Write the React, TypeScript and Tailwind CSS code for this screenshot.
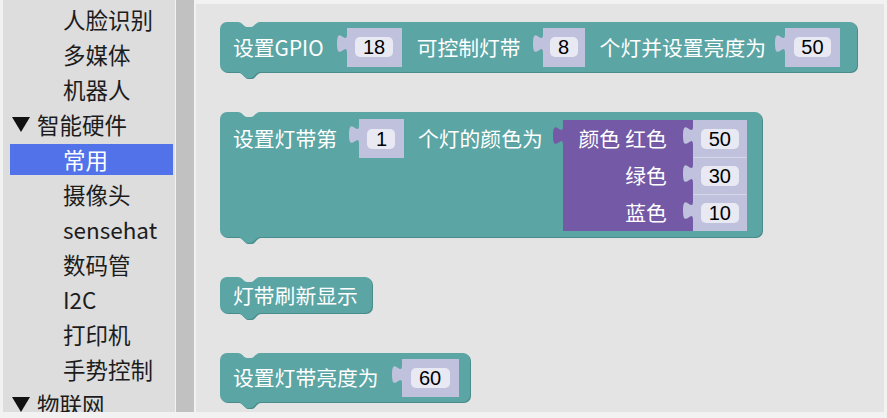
import React from "react";
import clsx from "clsx";

type Item = { label: string; level: 0 | 1; selected?: boolean };

const items: Item[] = [
  { label: "人脸识别", level: 1 },
  { label: "多媒体", level: 1 },
  { label: "机器人", level: 1 },
  { label: "智能硬件", level: 0 },
  { label: "常用", level: 1, selected: true },
  { label: "摄像头", level: 1 },
  { label: "sensehat", level: 1 },
  { label: "数码管", level: 1 },
  { label: "I2C", level: 1 },
  { label: "打印机", level: 1 },
  { label: "手势控制", level: 1 },
  { label: "物联网", level: 0 },
];

function Caret() {
  return (
    <svg width="18" height="15" viewBox="0 0 18 15" className="shrink-0">
      <polygon points="0,0 18,0 9,15" fill="#111" />
    </svg>
  );
}

function Sidebar() {
  return (
    <div className="h-full w-[172px] shrink-0 overflow-hidden bg-[#dddddd] pt-[4px] font-['Noto_Sans_CJK_SC',sans-serif] text-[22.5px]">
      {items.map((it) => (
        <div key={it.label} className="h-[35px] pl-[7px] pr-[2px]">
          <div
            className={clsx(
              "flex h-[31px] items-center leading-none whitespace-nowrap",
              it.selected ? "bg-[#5272ea] text-white" : "text-[#1c1c1c]",
              it.level ? "pl-[53px]" : "gap-[7px] pl-[2px]"
            )}
          >
            {it.level === 0 && <Caret />}
            <span>{it.label}</span>
          </div>
        </div>
      ))}
    </div>
  );
}

// jigsaw knob on the left side of an output (value) block
function Tab({ fill, className }: { fill: string; className?: string }) {
  return (
    <svg width="10" height="19" viewBox="0 0 8 15" preserveAspectRatio="none" className={clsx("absolute overflow-visible", className)}>
      <path d="M8,0 C8,10 0,-8 0,7.5 C0,23 8,5 8,15 Z" fill={fill} />
    </svg>
  );
}

function Notches() {
  return (
    <>
      <svg width="22" height="6" viewBox="0 0 22 6" className="absolute left-[18px] top-0">
        <path d="M0,0 C4,0 6,5 9,5 L13,5 C16,5 18,0 22,0 Z" fill="#e4e4e4" />
      </svg>
      <svg width="24" height="8" viewBox="0 0 24 8" className="absolute left-[18px] top-full">
        <path d="M0,0 C4,0 6,6 9,6 L13,6 C16,6 18,0 22,0 Z" fill="#4a8b8b" transform="translate(1,1)" />
        <path d="M0,0 C4,0 6,6 9,6 L13,6 C16,6 18,0 22,0 Z" fill="#5ba5a5" />
      </svg>
    </>
  );
}

function Field({ value, className }: { value: string; className: string }) {
  return (
    <div
      className={clsx(
        "flex h-[20px] items-center justify-center rounded-[5px] bg-[#e9e9f3] font-['Liberation_Sans',sans-serif] text-[20px] leading-none text-black",
        className
      )}
    >
      {value}
    </div>
  );
}

function Socket({ value, className, fieldClass }: { value: string; className: string; fieldClass: string }) {
  return (
    <div className={clsx("relative flex shrink-0 items-center justify-center bg-[#bfc1dd]", className)}>
      <Tab fill="#bfc1dd" className="left-[-10px] top-[6px]" />
      <Field value={value} className={fieldClass} />
    </div>
  );
}

function Label({ children, className }: { children: React.ReactNode; className?: string }) {
  return <span className={clsx("shrink-0 whitespace-nowrap leading-none", className)}>{children}</span>;
}

function ColourBlock() {
  const rows = [
    { left: "颜色", label: "红色", value: "50" },
    { label: "绿色", value: "30" },
    { label: "蓝色", value: "10" },
  ];
  return (
    <div className="relative mt-[1px] ml-[20px] flex shrink-0">
      <Tab fill="#7459a6" className="left-[-10px] top-[6px]" />
      <div className="flex w-[130px] flex-col bg-[#7459a6]">
        {rows.map((r) => (
          <div key={r.label} className="flex h-[37px] items-center justify-end gap-[5px] pr-[26px]">
            {r.left && <Label>{r.left}</Label>}
            <Label>{r.label}</Label>
          </div>
        ))}
      </div>
      <div className="flex w-[54px] flex-col">
        {rows.map((r) => (
          <Socket key={r.label} value={r.value} className="h-[37px] w-[54px] border-t border-[#d4d6e8] first:border-t-0" fieldClass="w-[38px]" />
        ))}
      </div>
    </div>
  );
}

function Workspace() {
  return (
    <div className="relative mt-[4px] flex-1 overflow-hidden bg-[#e4e4e4] font-['Noto_Sans_CJK_SC',sans-serif] text-[20.8px] text-white">
      {/* 设置GPIO ... */}
      <div className="absolute left-[24px] top-[18px] flex h-[50px] w-[637px] items-center rounded-[7px] bg-[#5ba5a5] pl-[13px] shadow-[1px_1px_0_#4a8b8b]">
        <Notches />
        <Label>设置GPIO</Label>
        <Socket value="18" className="ml-[23px] h-[39px] w-[55px]" fieldClass="w-[38px]" />
        <Label className="ml-[15px]">可控制灯带</Label>
        <Socket value="8" className="ml-[22px] h-[39px] w-[42px]" fieldClass="w-[28px]" />
        <Label className="ml-[15px]">个灯并设置亮度为</Label>
        <Socket value="50" className="ml-[19px] h-[39px] w-[55px]" fieldClass="w-[37px]" />
      </div>

      {/* 设置灯带第 n 个灯的颜色 */}
      <div className="absolute left-[24px] top-[108px] flex h-[125px] w-[542px] items-start rounded-[7px] bg-[#5ba5a5] pl-[13px] pt-[7px] shadow-[1px_1px_0_#4a8b8b]">
        <Notches />
        <div className="flex h-[39px] items-center">
          <Label>设置灯带第</Label>
        </div>
        <Socket value="1" className="ml-[22px] h-[39px] w-[45px]" fieldClass="w-[28px]" />
        <div className="ml-[14px] flex h-[39px] items-center">
          <Label>个灯的颜色为</Label>
        </div>
        <ColourBlock />
      </div>

      {/* 灯带刷新显示 */}
      <div className="absolute left-[24px] top-[273px] flex h-[36px] w-[152px] items-center rounded-[7px] bg-[#5ba5a5] pl-[13px] shadow-[1px_1px_0_#4a8b8b]">
        <Notches />
        <Label>灯带刷新显示</Label>
      </div>

      {/* 设置灯带亮度为 */}
      <div className="absolute left-[24px] top-[349px] flex h-[49px] w-[250px] items-center rounded-[7px] bg-[#5ba5a5] pl-[13px] shadow-[1px_1px_0_#4a8b8b]">
        <Notches />
        <Label>设置灯带亮度为</Label>
        <Socket value="60" className="ml-[23px] h-[38px] w-[57px]" fieldClass="w-[39px]" />
      </div>
    </div>
  );
}

export default function App() {
  return (
    <div className="flex h-[418px] w-[887px] overflow-hidden bg-[#f2f2f2] pb-[6px] pl-[3px] pr-[3px]">
      <Sidebar />
      <div className="w-[1px] shrink-0" />
      <div className="h-full w-[18px] shrink-0 bg-[#c1c1c1]" />
      <div className="w-[2px] shrink-0" />
      <Workspace />
    </div>
  );
}
